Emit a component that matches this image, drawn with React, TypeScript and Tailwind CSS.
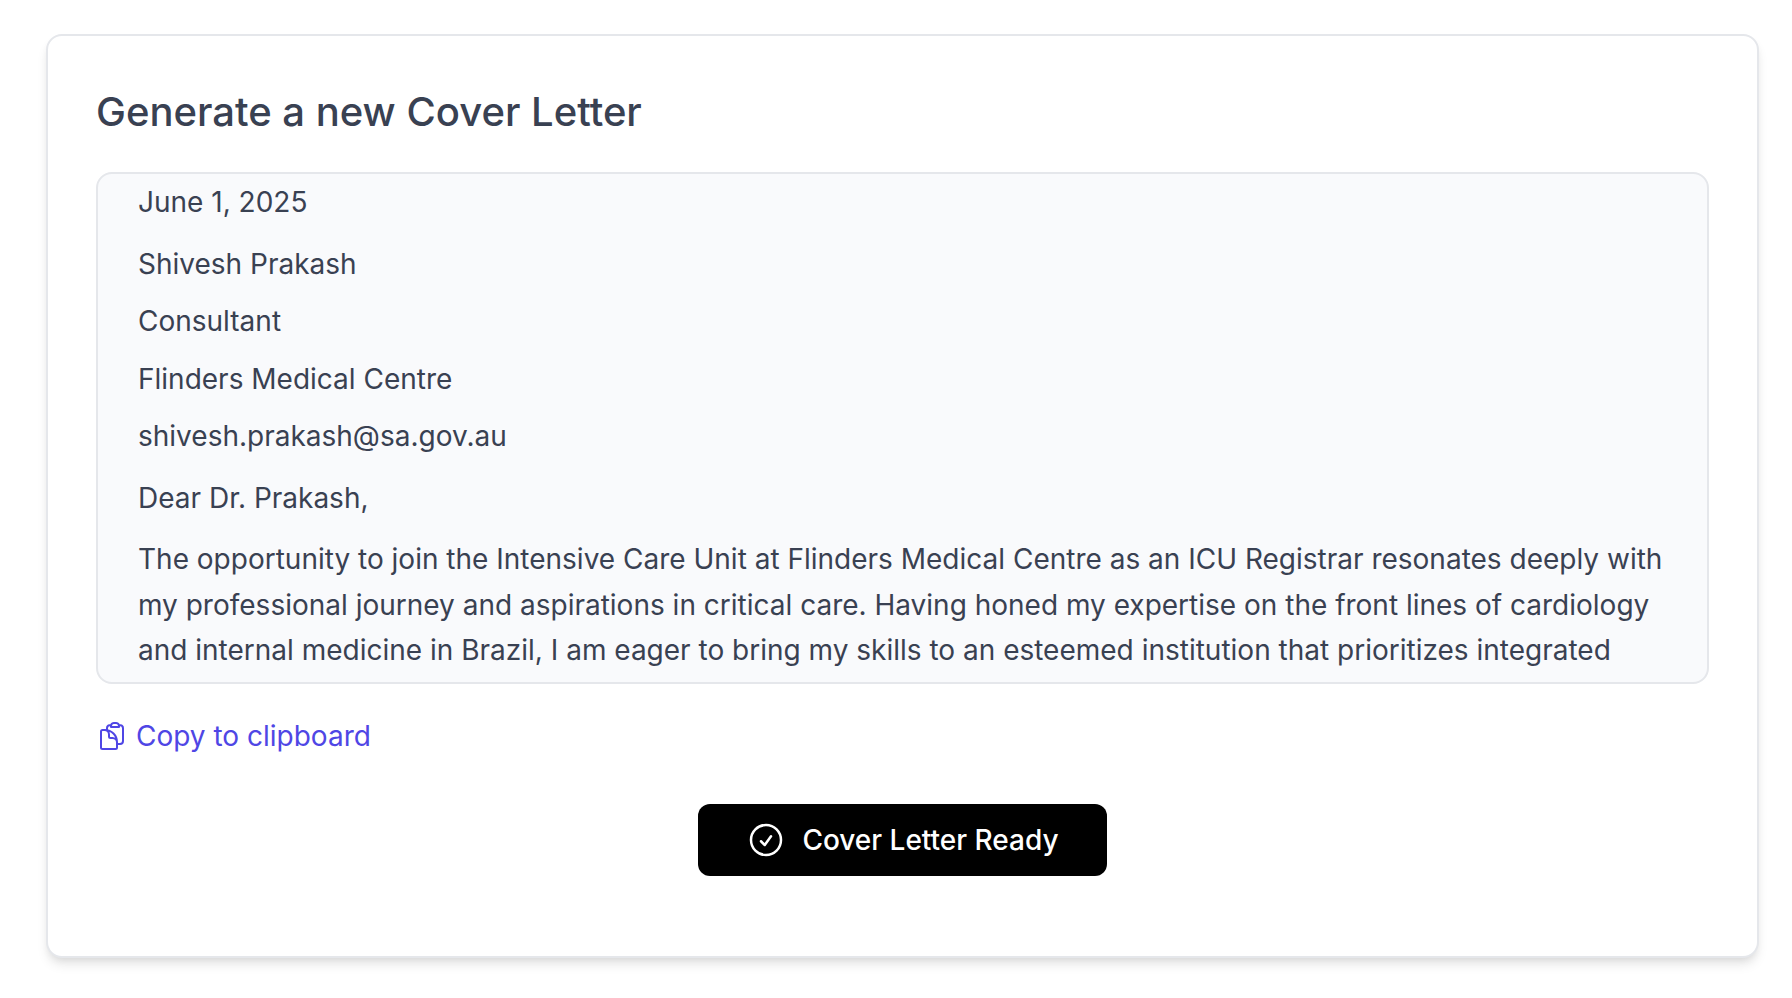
const lines = ["Shivesh Prakash", "Consultant", "Flinders Medical Centre", "shivesh.prakash@sa.gov.au"];

function ClipboardIcon() {
  return (
    <svg className="size-8" viewBox="0 0 24 24" fill="none" stroke="currentColor" strokeWidth="1.5" strokeLinecap="round" strokeLinejoin="round" aria-hidden="true">
      <path d="M8.25 7.5V6.108c0-1.135.845-2.098 1.976-2.192.373-.03.748-.057 1.123-.08M15.75 18H18a2.25 2.25 0 0 0 2.25-2.25V6.108c0-1.135-.845-2.098-1.976-2.192a48.424 48.424 0 0 0-1.123-.08M15.75 18.75v-1.875a3.375 3.375 0 0 0-3.375-3.375h-1.5a1.125 1.125 0 0 1-1.125-1.125v-1.5A3.375 3.375 0 0 0 6.375 7.5H5.25m11.9-3.664A2.251 2.251 0 0 0 15 2.25h-1.5a2.251 2.251 0 0 0-2.15 1.586m5.8 0c.065.21.1.433.1.664v.75h-6V4.5c0-.231.035-.454.1-.664M6.75 7.5H4.875c-.621 0-1.125.504-1.125 1.125v12c0 .621.504 1.125 1.125 1.125h9.75c.621 0 1.125-.504 1.125-1.125V16.5a9 9 0 0 0-9-9Z" />
    </svg>
  );
}

function CheckCircleIcon() {
  return (
    <svg className="size-10" viewBox="0 0 24 24" fill="none" stroke="currentColor" strokeWidth="1.5" strokeLinecap="round" strokeLinejoin="round" aria-hidden="true">
      <path d="M9 12.75 11.25 15 15 9.75M21 12a9 9 0 1 1-18 0 9 9 0 0 1 18 0Z" />
    </svg>
  );
}

export default function App() {
  return (
    <main className="min-h-screen bg-white pt-[34px] pr-[33px] pb-10 pl-[46px] font-['Inter',sans-serif] text-[28px] text-[#394152]">
      <section className="rounded-2xl border-2 border-[#e5e7eb] bg-white px-12 pt-12 pb-20 shadow-[0_8px_12px_-2px_rgba(0,0,0,0.1),0_4px_8px_-4px_rgba(0,0,0,0.1)]">
        <h1 className="mb-8 text-[40px] leading-14 font-medium">Generate a new Cover Letter</h1>
        <article className="h-128 overflow-hidden rounded-2xl border-2 border-[#e5e7eb] bg-[#f9fafc] px-10 pt-1.5 leading-relaxed">
          <p className="mb-4">June 1, 2025</p>
          <div className="mb-4 flex flex-col gap-3">
            {lines.map((line) => (
              <p key={line}>{line}</p>
            ))}
          </div>
          <p className="mb-4">Dear Dr. Prakash,</p>
          <p>
            The opportunity to join the Intensive Care Unit at Flinders Medical Centre as an ICU Registrar resonates deeply with my professional journey and aspirations in critical care. Having honed my expertise on the front lines of cardiology and internal medicine in Brazil, I am eager to bring my skills to an esteemed institution that prioritizes integrated
          </p>
        </article>
        <button type="button" className="mt-8 flex items-center gap-2 leading-10 text-[#4f46e5]">
          <ClipboardIcon />
          Copy to clipboard
        </button>
        <div className="mt-12 flex justify-center">
          <button type="button" className="flex h-18 items-center gap-4 rounded-xl bg-black px-12 leading-10 font-medium text-white">
            <CheckCircleIcon />
            Cover Letter Ready
          </button>
        </div>
      </section>
    </main>
  );
}
